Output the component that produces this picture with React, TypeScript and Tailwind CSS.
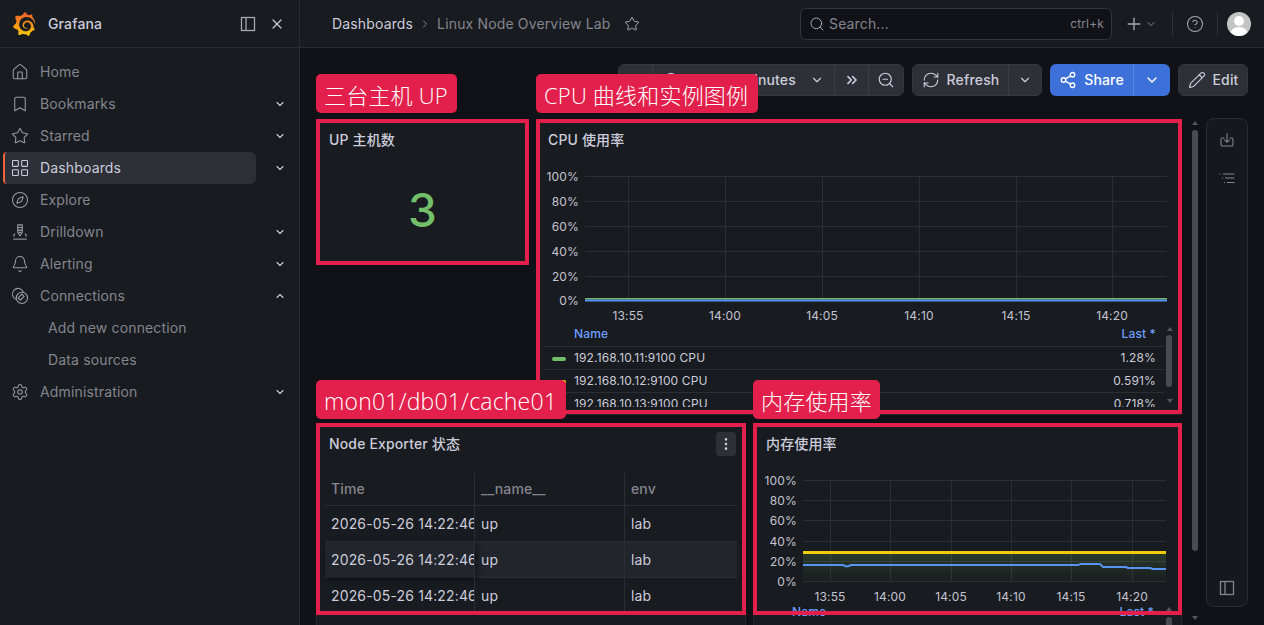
import type { ReactNode } from 'react';
import {
  Bell,
  Bookmark,
  ChevronDown,
  ChevronRight,
  ChevronUp,
  ChevronsRight,
  CircleHelp,
  Clock,
  Compass,
  EllipsisVertical,
  Home,
  LayoutGrid,
  Pencil,
  Plus,
  RefreshCw,
  Search,
  Settings,
  Share2,
  Star,
  X,
  ZoomOut,
} from 'lucide-react';
import { SiGrafana } from 'react-icons/si';

function DockIcon({ className }: { className?: string }) {
  return (
    <svg viewBox="0 0 16 16" fill="none" stroke="currentColor" strokeWidth="1.3" className={className}>
      <rect x="1.5" y="1.5" width="13" height="13" />
      <line x1="6" y1="1.5" x2="6" y2="14.5" />
    </svg>
  );
}

function DrillIcon({ className }: { className?: string }) {
  return (
    <svg viewBox="0 0 24 24" fill="none" stroke="currentColor" strokeWidth="1.5" className={className}>
      <path d="M9 2.5h6v10l-3 4.5-3-4.5z" />
      <path d="M9 6h6M9 9.500h6M10 12.500h4" />
      <path d="M3 21.500h18" />
      <path d="M5 14l-1.500 4M19 14l1.500 4" />
    </svg>
  );
}

function ConnectionsIcon({ className }: { className?: string }) {
  return (
    <svg viewBox="0 0 24 24" fill="none" stroke="currentColor" strokeWidth="1.5" className={className}>
      <path d="M7 16.500A7.500 7.500 0 1 1 16.500 7" />
      <circle cx="14.500" cy="14.500" r="7.500" />
      <path d="M9.500 14.500l5-5 3 3-5 5z" />
    </svg>
  );
}

function ImportIcon({ className }: { className?: string }) {
  return (
    <svg viewBox="0 0 24 24" fill="none" stroke="currentColor" strokeWidth="1.6" className={className}>
      <path d="M8 9H5a2 2 0 0 0-2 2v8a2 2 0 0 0 2 2h14a2 2 0 0 0 2-2v-8a2 2 0 0 0-2-2h-3" />
      <path d="M12 2v13M8 11.500l4 4 4-4" />
    </svg>
  );
}

function OutlineIcon({ className }: { className?: string }) {
  return (
    <svg viewBox="0 0 16 12" fill="none" stroke="currentColor" strokeWidth="1.2" className={className}>
      <path d="M0.500 1h1M4 1h11.500M3 5h1M6 5h9.500M5 9.500h1M8 9.500h7.500" />
    </svg>
  );
}

const navItems: { label: string; icon: ReactNode; chevron?: 'down' | 'up'; active?: boolean; sub?: boolean }[] = [
  { label: 'Home', icon: <Home className="size-[18px]" strokeWidth={1.4} /> },
  { label: 'Bookmarks', icon: <Bookmark className="size-[18px]" strokeWidth={1.4} />, chevron: 'down' },
  { label: 'Starred', icon: <Star className="size-[18px]" strokeWidth={1.4} />, chevron: 'down' },
  { label: 'Dashboards', icon: <LayoutGrid className="size-5" strokeWidth={1.3} />, chevron: 'down', active: true },
  { label: 'Explore', icon: <Compass className="size-[18px]" strokeWidth={1.4} /> },
  { label: 'Drilldown', icon: <DrillIcon className="size-[18px]" />, chevron: 'down' },
  { label: 'Alerting', icon: <Bell className="size-[18px]" strokeWidth={1.4} />, chevron: 'down' },
  { label: 'Connections', icon: <ConnectionsIcon className="size-[18px]" />, chevron: 'up' },
  { label: 'Add new connection', icon: null, sub: true },
  { label: 'Data sources', icon: null, sub: true },
  { label: 'Administration', icon: <Settings className="size-[18px]" strokeWidth={1.4} />, chevron: 'down' },
];

function Sidebar() {
  return (
    <aside className="w-[300px] h-full shrink-0 bg-[#181b1f] border-r border-[#2a2c31] flex flex-col">
      <div className="h-12 shrink-0 border-b border-[#2a2c31] flex items-center pl-[12px] pr-[14px]">
        <svg width="0" height="0" className="absolute">
          <defs>
            <linearGradient id="grafana-gradient" x1="0" y1="0" x2="0" y2="1">
              <stop offset="0" stopColor="#f05a28" />
              <stop offset="1" stopColor="#fbca0a" />
            </linearGradient>
          </defs>
        </svg>
        <SiGrafana className="size-6" fill="url(#grafana-gradient)" />
        <span className="ml-[12px] text-sm font-medium text-[#ccccdc]">Grafana</span>
        <DockIcon className="size-4 ml-auto text-[#a8a8b6]" />
        <X className="size-4 ml-[13px] text-[#ccccdc]" strokeWidth={1.8} />
      </div>
      <nav className="pt-2 flex flex-col">
        {navItems.map((item) => (
          <div key={item.label} className="h-8 flex items-center relative">
            <div
              className={`h-8 w-[253px] ml-[3px] flex items-center rounded-r-md ${
                item.active ? 'bg-[#2d3036] border-l-2 border-[#f2643c] rounded-l-sm text-[#ccccdc]' : 'text-[#85858f]'
              }`}
            >
              {item.sub ? (
                <span className="ml-[45px] text-sm text-[#85858f]">{item.label}</span>
              ) : (
                <>
                  <span className={`flex justify-center w-4 shrink-0 [&>svg]:shrink-0 ${item.active ? 'ml-[7px] text-[#ccccdc]' : 'ml-[9px] text-[#9a9aa6]'}`}>
                    {item.icon}
                  </span>
                  <span className="ml-[12px] text-sm">{item.label}</span>
                </>
              )}
            </div>
            {item.chevron === 'down' && <ChevronDown className="size-3 ml-[18px] text-[#ccccdc]" strokeWidth={2.2} />}
            {item.chevron === 'up' && <ChevronUp className="size-3 ml-[18px] text-[#ccccdc]" strokeWidth={2.2} />}
          </div>
        ))}
      </nav>
    </aside>
  );
}

function TopBar() {
  return (
    <header className="h-12 shrink-0 bg-[#181b1f] border-b border-[#2a2c31] flex items-center pl-[32px] pr-[13px]">
      <span className="text-sm text-[#ccccdc]">Dashboards</span>
      <ChevronRight className="size-3 mx-[6px] text-[#85858f]" />
      <span className="text-sm text-[#85858f]">Linux Node Overview Lab</span>
      <Star className="size-4 ml-[14px] text-[#a8a8b6]" strokeWidth={1.5} />
      <div className="ml-auto w-[312px] h-8 rounded-md border border-[#34363c] bg-[#111217] flex items-center pl-2 pr-[7px]">
        <Search className="size-4 text-[#a8a8b6]" strokeWidth={1.5} />
        <span className="ml-1 text-sm text-[#85858f]">Search...</span>
        <span className="ml-auto text-xs text-[#85858f]">ctrl+k</span>
      </div>
      <Plus className="size-5 ml-[12px] text-[#a8a8b6]" strokeWidth={1.6} />
      <ChevronDown className="size-3 ml-[1px] text-[#85858f]" />
      <div className="h-6 w-px bg-[#2f3137] ml-[15px]" />
      <CircleHelp className="size-[18px] ml-[13px] text-[#a8a8b6]" strokeWidth={1.4} />
      <div className="h-6 w-px bg-[#2f3137] ml-[13px]" />
      <div className="size-6 ml-[9px] rounded-full overflow-hidden bg-[#c4c4c4]">
        <svg viewBox="0 0 24 24" className="size-6 text-white" fill="currentColor">
          <circle cx="12" cy="9" r="5" />
          <path d="M3 24c0-6 4-9 9-9s9 3 9 9z" />
        </svg>
      </div>
    </header>
  );
}

function Toolbar() {
  const seg = 'h-full flex items-center justify-center border-r border-[#3a3d44] last:border-r-0';
  return (
    <div className="h-8 mt-4 flex justify-end gap-2 text-sm font-medium text-[#ccccdc]">
      <div className="w-[286px] flex rounded-md bg-[#2d3036] border border-[#34373d]">
        <div className={`${seg} w-[34px]`} />
        <div className={`${seg} w-[182px] justify-start pl-[10px]`}>
          <Clock className="size-4" strokeWidth={1.5} />
          <span className="ml-2">Last 30 minutes</span>
          <ChevronDown className="size-3.5 ml-auto mr-[10px]" />
        </div>
        <div className={`${seg} w-[34px]`}>
          <ChevronsRight className="size-4" strokeWidth={2.5} />
        </div>
        <div className={`${seg} flex-1`}>
          <ZoomOut className="size-[18px]" strokeWidth={1.5} />
        </div>
      </div>
      <div className="w-[130px] flex rounded-md bg-[#2d3036] border border-[#34373d]">
        <div className={`${seg} w-[96px] gap-[7px]`}>
          <RefreshCw className="size-[18px]" strokeWidth={1.5} />
          <span>Refresh</span>
        </div>
        <div className={`${seg} flex-1`}>
          <ChevronDown className="size-3.5" />
        </div>
      </div>
      <div className="w-[120px] flex rounded-md bg-[#3d71d9] text-white">
        <div className="h-full w-[84px] flex items-center justify-center gap-[7px] border-r border-[#5a87e0]">
          <Share2 className="size-[18px]" strokeWidth={1.8} />
          <span>Share</span>
        </div>
        <div className="h-full flex-1 flex items-center justify-center">
          <ChevronDown className="size-4" />
        </div>
      </div>
      <div className="w-[70px] flex items-center justify-center gap-[7px] rounded-md bg-[#2d3036] border border-[#34373d]">
        <Pencil className="size-[18px]" strokeWidth={1.5} />
        <span>Edit</span>
      </div>
    </div>
  );
}

// red box and caption drawn over the panel, like in the annotated screenshot
function Callout({ text, top, width, size = 'text-[22px]' }: { text: string; top: string; width: string; size?: string }) {
  return (
    <>
      <div className="absolute inset-0 border-4 border-[#e3204c] pointer-events-none" />
      <div
        className={`absolute left-0 ${top} ${width} ${size} h-[39px] rounded-[5px] bg-[#e3204c] text-white font-light tracking-[0.2px] leading-[39px] pt-[2px] pl-[8px] whitespace-nowrap font-['Open_Sans','Noto_Sans_CJK_SC',sans-serif]`}
      >
        {text}
      </div>
    </>
  );
}

function PanelTitle({ children }: { children: ReactNode }) {
  return <div className="h-8 flex items-center text-sm font-medium text-[#ccccdc]">{children}</div>;
}

type ChartProps = {
  width: number;
  height: number;
  left: number;
  right: number;
  ys: number[];
  xs: number[];
  children: ReactNode;
};

const yTicks = ['100%', '80%', '60%', '40%', '20%', '0%'];
const xTicks = ['13:55', '14:00', '14:05', '14:10', '14:15', '14:20'];

function Chart({ width, height, left, right, ys, xs, children }: ChartProps) {
  return (
    <svg width={width} height={height} className="block text-xs">
      {ys.map((y, i) => (
        <g key={y}>
          <line x1={left} x2={right} y1={y + 0.5} y2={y + 0.5} stroke="#2b2e33" />
          <text x={left - 6} y={y + 4.5} textAnchor="end" fill="#c4c4d2">
            {yTicks[i]}
          </text>
        </g>
      ))}
      {xs.map((x, i) => (
        <g key={x}>
          <line x1={x + 0.5} x2={x + 0.5} y1={ys[0]} y2={ys[5]} stroke="#2b2e33" />
          <text x={x} y={ys[5] + 20} textAnchor="middle" fill="#c4c4d2">
            {xTicks[i]}
          </text>
        </g>
      ))}
      {children}
    </svg>
  );
}

const legendRows = [
  { name: '192.168.10.11:9100 CPU', value: '1.28%', color: 'bg-[#73bf69]' },
  { name: '192.168.10.12:9100 CPU', value: '0.591%', color: 'bg-[#f2cc0c]' },
  { name: '192.168.10.13:9100 CPU', value: '0.718%', color: 'bg-[#5794f2]' },
];

function Legend() {
  return (
    <div className="relative w-[620px] text-xs text-[#ccccdc]">
      <div className="h-[23px] flex items-center justify-between border-b border-[#2b2e33] pl-[30px] pr-2 pb-[2px] font-medium text-[#6e9fff]">
        <span>Name</span>
        <span>Last *</span>
      </div>
      {legendRows.map((row) => (
        <div key={row.name} className="h-[23px] flex items-center border-b border-[#2b2e33] pr-2">
          <span className={`w-[14px] h-1 ml-2 mt-[2px] rounded-sm ${row.color}`} />
          <span className="ml-2">{row.name}</span>
          <span className="ml-auto">{row.value}</span>
        </div>
      ))}
    </div>
  );
}

function CpuPanel() {
  return (
    <div className="relative flex-1 h-[296px] bg-[#181b1f] border border-[#25272c] rounded-sm">
      <div className="h-full overflow-hidden pl-[11px] pt-[4px]">
        <PanelTitle>CPU 使用率</PanelTitle>
      </div>
      <div className="absolute left-[3px] top-[40px]">
        <Chart
          width={636}
          height={170}
          left={45}
          right={627}
          ys={[16, 41, 66, 91, 116, 140]}
          xs={[88, 185, 282, 379, 476, 572]}
        >
          <rect x={45} y={138} width={582} height={1.5} fill="#73bf69" />
          <rect x={45} y={139.5} width={582} height={2} fill="#5794f2" />
        </Chart>
      </div>
      <div className="absolute left-[7px] top-[204px] h-[83px] overflow-hidden">
        <Legend />
      </div>
      <div className="absolute left-[629px] top-[215px] w-[6px] h-[52px] rounded-full bg-[#4a4b52]" />
      <div className="absolute left-[630px] top-[207px] border-x-[3px] border-x-transparent border-b-[4px] border-b-[#55565d]" />
      <div className="absolute left-[630px] top-[279px] border-x-[3px] border-x-transparent border-t-[4px] border-t-[#55565d]" />
      <div className="absolute -inset-px h-[295px]">
        <Callout text="CPU 曲线和实例图例" top="top-[-45px]" width="w-[222px]" />
      </div>
    </div>
  );
}

const tableRows = [false, true, false];

function StatusPanel() {
  const cell = 'h-full flex items-center pl-[6px] overflow-hidden whitespace-nowrap border-r border-[#2b2e33] last:border-r-0';
  return (
    <div className="relative w-[430px] h-[240px] bg-[#181b1f] border border-[#25272c] rounded-sm">
      <div className="pl-[12px] pr-[9px] pt-[4px] flex items-start justify-between">
        <PanelTitle>Node Exporter 状态</PanelTitle>
        <div className="w-5 h-6 mt-[4px] rounded bg-[#2d3036] flex items-center justify-center text-[#ccccdc]">
          <EllipsisVertical className="size-4" strokeWidth={2} />
        </div>
      </div>
      <div className="mx-2 mt-[13px] text-sm text-[#ccccdc]">
        <div className="h-[33px] grid grid-cols-[150px_150px_1fr] border-b border-[#2b2e33] font-medium text-[#85858f]">
          <div className={cell}>Time</div>
          <div className={cell}>__name__</div>
          <div className={cell}>env</div>
        </div>
        {tableRows.map((hovered, i) => (
          <div
            key={i}
            className={`h-9 grid grid-cols-[150px_150px_1fr] border-b border-[#2b2e33] ${hovered ? 'bg-[#22252b]' : ''}`}
          >
            <div className={`${cell} ${hovered ? 'shadow-[2px_2px_6px_rgba(0,0,0,0.5)]' : ''}`}>2026-05-26 14:22:46</div>
            <div className={cell}>up</div>
            <div className={cell}>lab</div>
          </div>
        ))}
      </div>
      <div className="absolute -left-px -right-px -top-px h-[192px]">
        <Callout text="mon01/db01/cache01" top="top-[-43px]" width="w-[250px]" size="text-[23px]" />
      </div>
    </div>
  );
}

function MemoryPanel() {
  const blueLine =
    '803,565 843,565 846,566.500 849,566 851,565 1078,565 1081,564 1100,564 1103,567 1126,567 1128,568 1150,568 1153,569 1166,569';
  return (
    <div className="relative flex-1 h-[240px] bg-[#181b1f] border border-[#25272c] rounded-sm">
      <div className="pl-[12px] pt-[4px]">
        <PanelTitle>内存使用率</PanelTitle>
      </div>
      <div className="absolute left-[-1px] top-[39px]">
        <Chart
          width={428}
          height={148}
          left={50}
          right={413}
          ys={[17, 37, 57, 78, 98, 118]}
          xs={[77, 137, 198, 258, 318, 379]}
        >
          <defs>
            <linearGradient id="memory-fill" x1="0" y1="0" x2="0" y2="1">
              <stop offset="0" stopColor="#73bf69" stopOpacity="0.2" />
              <stop offset="1" stopColor="#73bf69" stopOpacity="0.01" />
            </linearGradient>
          </defs>
          <rect x={50} y={89} width={363} height={29} fill="url(#memory-fill)" />
          <line x1={50} x2={413} y1={89.500} y2={89.500} stroke="#f2cc0c" strokeWidth={3} />
          <polyline
            points={blueLine
              .split(' ')
              .map((p) => {
                const [x, y] = p.split(',').map(Number);
                return `${x - 753},${y - 463}`;
              })
              .join(' ')}
            fill="none"
            stroke="#5794f2"
            strokeWidth={2}
          />
        </Chart>
      </div>
      <div className="absolute left-[38px] right-[27px] top-[180px] flex justify-between text-xs font-medium text-[#6e9fff]">
        <span>Name</span>
        <span>Last *</span>
      </div>
      <div className="absolute left-[412px] top-[193px] w-[6px] h-[40px] rounded-full bg-[#4a4b52]" />
      <div className="absolute left-[412px] top-[183px] border-x-[3px] border-x-transparent border-b-[4px] border-b-[#55565d]" />
      <div className="absolute -left-px -right-px -top-px h-[192px]">
        <Callout text="内存使用率" top="top-[-43px]" width="w-[127px]" />
      </div>
    </div>
  );
}

function UpPanel() {
  return (
    <div className="relative w-[213px] h-[146px] bg-[#181b1f] flex flex-col">
      <div className="pl-[13px] pt-[5px]">
        <PanelTitle>UP 主机数</PanelTitle>
      </div>
      <div className="flex-1 flex items-center justify-center pb-[2px] text-[46px] font-medium leading-none text-[#73bf69]">3</div>
      <Callout text="三台主机 UP" top="top-[-45px]" width="w-[141px]" />
    </div>
  );
}

function PageScrollbar() {
  return (
    <div className="w-6 h-[502px] -mt-px shrink-0 pl-[2px] flex flex-col items-center">
      <div className="mt-[3px] border-x-[3px] border-x-transparent border-b-[4px] border-b-[#55565d]" />
      <div className="mt-[5px] w-[6px] h-[421px] rounded-full bg-[#4a4b52]" />
      <div className="mt-auto border-x-[3px] border-x-transparent border-t-[4px] border-t-[#55565d]" />
    </div>
  );
}

function SideToolbar() {
  return (
    <div className="w-[42px] h-[489px] -mt-px shrink-0 rounded-lg border border-[#2a2c31] bg-[#16181d] flex flex-col items-center pt-[13px] pb-[10px] text-[#85858f]">
      <ImportIcon className="size-4" />
      <OutlineIcon className="w-4 h-3 mt-[25px]" />
      <DockIcon className="size-4 mt-auto" />
    </div>
  );
}

export default function App() {
  return (
    <div className="h-[625px] w-[1264px] overflow-hidden flex bg-[#111217] tracking-[0.15px] font-['Inter','Noto_Sans_CJK_SC',sans-serif]">
      <Sidebar />
      <main className="flex-1 flex flex-col min-w-0">
        <TopBar />
        <div className="flex-1 min-h-0 pl-4 pr-4">
          <Toolbar />
          <div className="mt-[23px] flex">
            <div className="flex-1 flex flex-col gap-2 min-w-0">
              <div className="flex items-start gap-[7px]">
                <UpPanel />
                <CpuPanel />
              </div>
              <div className="flex gap-[7px]">
                <StatusPanel />
                <MemoryPanel />
              </div>
            </div>
            <PageScrollbar />
            <SideToolbar />
          </div>
        </div>
      </main>
    </div>
  );
}
